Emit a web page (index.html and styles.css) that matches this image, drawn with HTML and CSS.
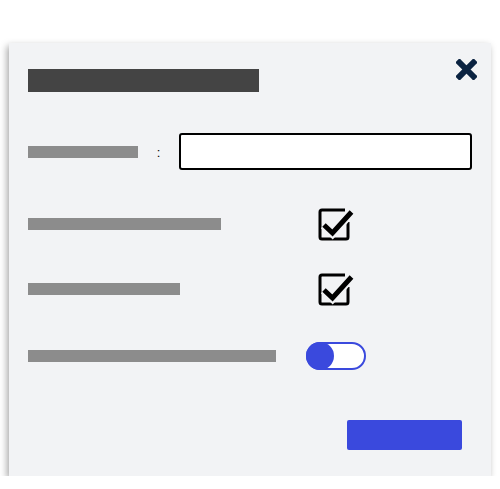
FILE: index.html
```html
<!DOCTYPE html>
<html lang="en">
<head>
    <meta charset="UTF-8">
    <title>Settings Dialog</title>
    <link rel="stylesheet" href="styles.css">
</head>
<body>
    <div class="dialog">
        <div class="dialog-header">
            <div class="title-bar"></div>
            <svg class="close-icon" width="21" height="21" viewBox="0 0 21 21">
                <path d="M3.5 3.5 L17.5 17.5 M17.5 3.5 L3.5 17.5" stroke="#0b2341" stroke-width="6" stroke-linecap="square" fill="none"/>
            </svg>
        </div>

        <div class="row row-input">
            <div class="label-bar w-110"></div>
            <span class="colon">:</span>
            <input type="text" class="text-field">
        </div>

        <div class="row row-check first-check">
            <div class="label-bar w-193"></div>
            <svg class="check-icon" width="38" height="36" viewBox="0 0 38 36">
                <path d="M28 4 H5 Q3 4 3 6 V31 Q3 33 5 33 H29 Q31 33 31 31 V16" stroke="#000" stroke-width="3" fill="none"/>
                <path d="M7 19 L15.5 27 L34.5 6" stroke="#f2f3f5" stroke-width="9" fill="none"/>
                <path d="M7 19 L15.5 27 L34.5 6" stroke="#000" stroke-width="5" fill="none"/>
            </svg>
        </div>

        <div class="row row-check second-check">
            <div class="label-bar w-152"></div>
            <svg class="check-icon" width="38" height="36" viewBox="0 0 38 36">
                <path d="M28 4 H5 Q3 4 3 6 V31 Q3 33 5 33 H29 Q31 33 31 31 V16" stroke="#000" stroke-width="3" fill="none"/>
                <path d="M7 19 L15.5 27 L34.5 6" stroke="#f2f3f5" stroke-width="9" fill="none"/>
                <path d="M7 19 L15.5 27 L34.5 6" stroke="#000" stroke-width="5" fill="none"/>
            </svg>
        </div>

        <div class="row row-toggle">
            <div class="label-bar w-248"></div>
            <div class="toggle">
                <div class="knob"></div>
            </div>
        </div>

        <div class="actions">
            <button class="primary-button"></button>
        </div>
    </div>
</body>
</html>
```

FILE: styles.css
```css
:root {
    --panel: #f2f3f5;
    --bar: #8c8c8c;
    --title: #444444;
    --blue: #3a49dd;
    --navy: #0b2341;
}

* {
    margin: 0;
    padding: 0;
    box-sizing: border-box;
}

body {
    font-family: 'Liberation Sans', Arial, sans-serif;
    background-color: #ffffff;
    padding: 43px 9px 0 9px;
}

.dialog {
    width: 482px;
    height: 433px;
    background-color: var(--panel);
    box-shadow: -2px 3px 7px rgba(0, 0, 0, 0.35);
    padding: 16px 14px 0 19px;
}

.dialog-header {
    display: flex;
    justify-content: space-between;
    align-items: flex-start;
    height: 33px;
}

.title-bar {
    width: 231px;
    height: 23px;
    margin-top: 10px;
    background-color: var(--title);
}

.close-icon {
    display: block;
}

.row {
    display: flex;
    align-items: center;
}

.label-bar {
    height: 12px;
    background-color: var(--bar);
}

.w-110 { width: 110px; }
.w-193 { width: 193px; }
.w-152 { width: 152px; }
.w-248 { width: 248px; }

.row-input {
    margin-top: 41px;
    height: 37px;
}

.colon {
    font-size: 13px;
    width: 41px;
    text-align: center;
    color: #000;
    margin-top: 2px;
}

.text-field {
    width: 293px;
    height: 37px;
    border: 2px solid #000;
    border-radius: 3px;
    background-color: #ffffff;
    outline: none;
}

.row-check {
    height: 36px;
}

.first-check {
    margin-top: 36px;
}

.second-check {
    margin-top: 29px;
}

.row-check .check-icon {
    display: block;
    margin-left: auto;
    margin-right: 122px;
}

.row-toggle {
    margin-top: 35px;
    height: 28px;
}

.toggle {
    width: 60px;
    height: 28px;
    margin-left: 30px;
    border: 2px solid var(--blue);
    border-radius: 14px;
    background-color: #ffffff;
    position: relative;
}

.knob {
    position: absolute;
    left: -2px;
    top: -2px;
    width: 28px;
    height: 28px;
    border-radius: 50%;
    background-color: var(--blue);
}

.actions {
    display: flex;
    justify-content: flex-end;
    margin-top: 50px;
    padding-right: 15px;
}

.primary-button {
    width: 115px;
    height: 30px;
    border: none;
    border-radius: 2px;
    background-color: var(--blue);
}
```
